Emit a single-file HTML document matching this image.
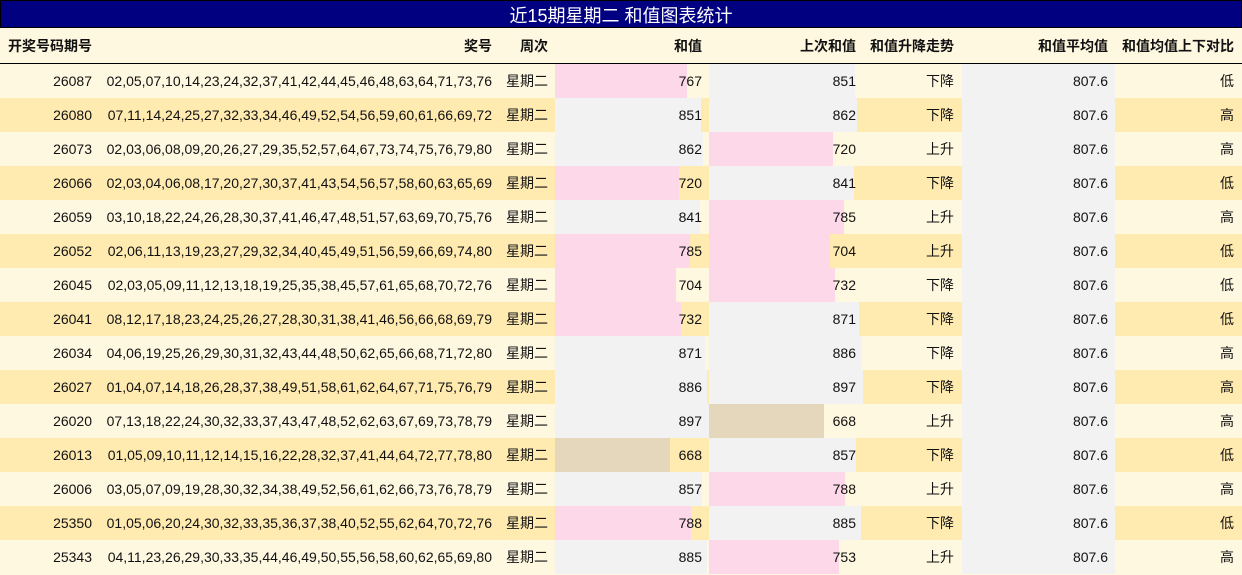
<!DOCTYPE html>
<html><head><meta charset="utf-8"><style>
*{margin:0;padding:0;box-sizing:border-box}
body{width:1242px;height:575px;overflow:hidden;background:#fff8e1;font-family:"Liberation Sans","Noto Sans CJK SC",sans-serif;font-size:14px;color:#111}
#t{position:absolute;left:0;top:0;width:1242px;height:28px;background:#000080;color:#fff;font-size:18px;text-align:center;line-height:30px;border:1px solid #000}
.r{position:absolute;left:0;width:1242px;height:34px}
.c{position:absolute;top:0;height:34px;line-height:34px;text-align:right;white-space:nowrap}
.h .c{font-weight:bold;line-height:37px}
.bar{position:absolute;top:0;height:34px;left:0}
</style></head><body>
<div id="t">近15期星期二 和值图表统计</div>
<div class="r h" style="top:28px;height:36px;background:#fff8e1;border-bottom:1px solid #000">
<div class="c" style="left:8px;text-align:left">开奖号码期号</div>
<div class="c" style="left:400px;width:92px">奖号</div>
<div class="c" style="left:500px;width:48px">周次</div>
<div class="c" style="left:555px;width:147px">和值</div>
<div class="c" style="left:709px;width:147px">上次和值</div>
<div class="c" style="left:862px;width:92px">和值升降走势</div>
<div class="c" style="left:962px;width:146px">和值平均值</div>
<div class="c" style="left:1115px;width:119px">和值均值上下对比</div>
</div>
<div id="rows"></div>
<script>
var d=[
["26087","02,05,07,10,14,23,24,32,37,41,42,44,45,46,48,63,64,71,73,76",767,851,"下降","低"],
["26080","07,11,14,24,25,27,32,33,34,46,49,52,54,56,59,60,61,66,69,72",851,862,"下降","高"],
["26073","02,03,06,08,09,20,26,27,29,35,52,57,64,67,73,74,75,76,79,80",862,720,"上升","高"],
["26066","02,03,04,06,08,17,20,27,30,37,41,43,54,56,57,58,60,63,65,69",720,841,"下降","低"],
["26059","03,10,18,22,24,26,28,30,37,41,46,47,48,51,57,63,69,70,75,76",841,785,"上升","高"],
["26052","02,06,11,13,19,23,27,29,32,34,40,45,49,51,56,59,66,69,74,80",785,704,"上升","低"],
["26045","02,03,05,09,11,12,13,18,19,25,35,38,45,57,61,65,68,70,72,76",704,732,"下降","低"],
["26041","08,12,17,18,23,24,25,26,27,28,30,31,38,41,46,56,66,68,69,79",732,871,"下降","低"],
["26034","04,06,19,25,26,29,30,31,32,43,44,48,50,62,65,66,68,71,72,80",871,886,"下降","高"],
["26027","01,04,07,14,18,26,28,37,38,49,51,58,61,62,64,67,71,75,76,79",886,897,"下降","高"],
["26020","07,13,18,22,24,30,32,33,37,43,47,48,52,62,63,67,69,73,78,79",897,668,"上升","高"],
["26013","01,05,09,10,11,12,14,15,16,22,28,32,37,41,44,64,72,77,78,80",668,857,"下降","低"],
["26006","03,05,07,09,19,28,30,32,34,38,49,52,56,61,62,66,73,76,78,79",857,788,"上升","高"],
["25350","01,05,06,20,24,30,32,33,35,36,37,38,40,52,55,62,64,70,72,76",788,885,"下降","低"],
["25343","04,11,23,26,29,30,33,35,44,46,49,50,55,56,58,60,62,65,69,80",885,753,"上升","高"]];
function col(v){return v>800?"#f2f2f2":(v<700?"#e5d7bb":"#fcd8e8")}
function bar(v){return '<div class="bar" style="width:'+Math.round(v*0.172)+'px;background:'+col(v)+'"></div>'}
var h="";
d.forEach(function(r,i){
var bg=i%2?"#ffeab0":"#fff8e1";
h+='<div class="r" style="top:'+(64+i*34)+'px;background:'+bg+'">'+
'<div class="c" style="left:0;width:92px">'+r[0]+'</div>'+
'<div class="c" style="left:100px;width:392px">'+r[1]+'</div>'+
'<div class="c" style="left:500px;width:48px">星期二</div>'+
'<div class="c" style="left:555px;width:153px">'+bar(r[2])+'<span style="position:relative;padding-right:6px">'+r[2]+'</span></div>'+
'<div class="c" style="left:709px;width:153px">'+bar(r[3])+'<span style="position:relative;padding-right:6px">'+r[3]+'</span></div>'+
'<div class="c" style="left:862px;width:92px">'+r[4]+'</div>'+
'<div class="c" style="left:962px;width:153px;background:#f2f2f2;padding-right:7px">807.6</div>'+
'<div class="c" style="left:1115px;width:119px">'+r[5]+'</div></div>';
});
document.getElementById("rows").innerHTML=h;
</script>
</body></html>
